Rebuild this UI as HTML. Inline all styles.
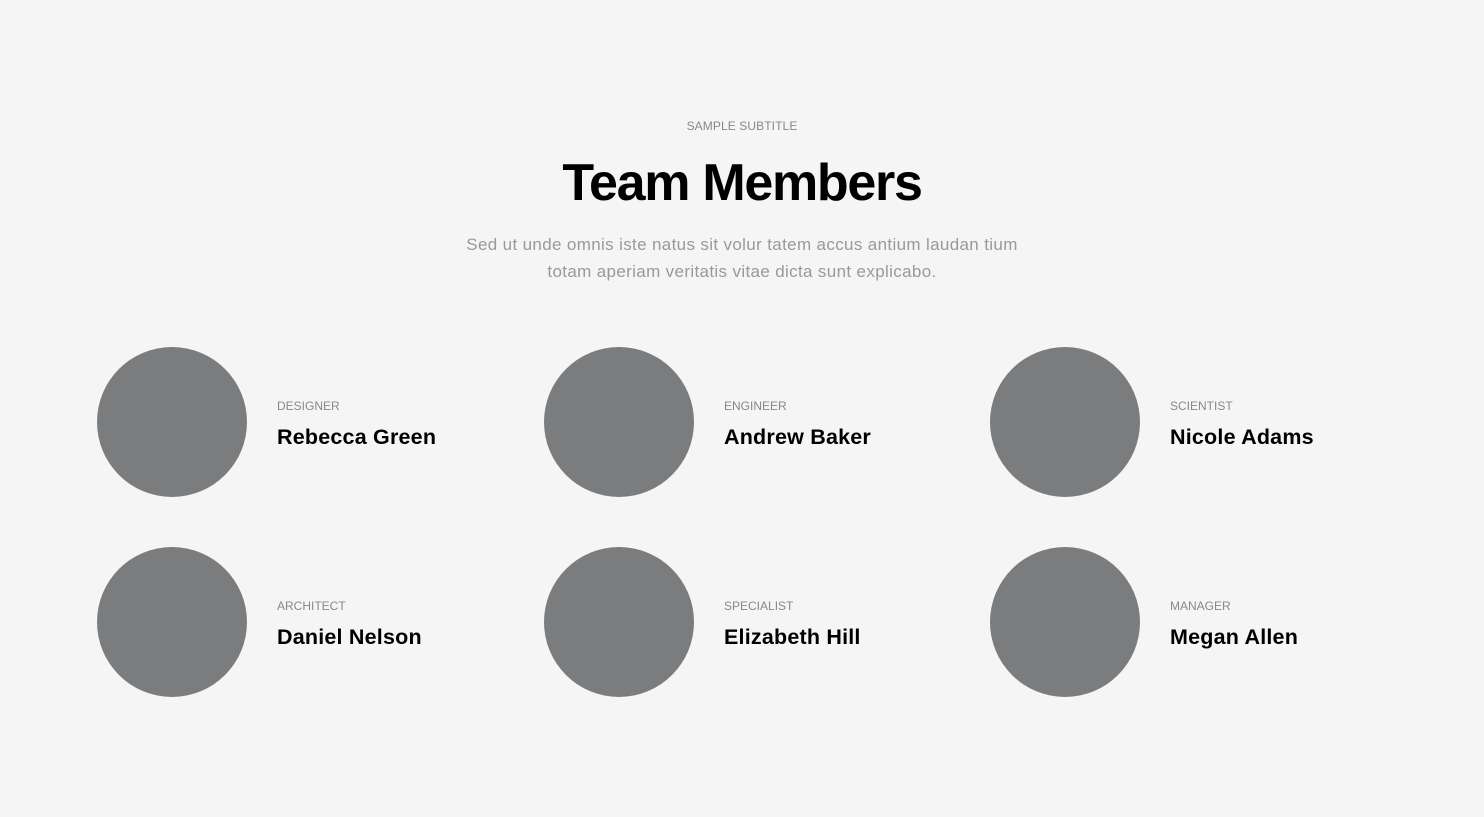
<!DOCTYPE html>
<html><head><meta charset="utf-8"><style>
body{margin:0;background:#f5f5f5;font-family:"Liberation Sans",sans-serif;width:1484px;height:817px;overflow:hidden;position:relative}
.sub{position:absolute;top:119px;left:0;width:1484px;text-align:center;font-size:12px;color:#888;letter-spacing:0.1px}
h1{position:absolute;top:153px;left:0;width:1484px;text-align:center;margin:0;font-size:52px;font-weight:bold;letter-spacing:-1.3px;color:#000;line-height:60px}
.desc{position:absolute;top:231px;left:0;width:1484px;text-align:center;font-size:17px;letter-spacing:0.35px;line-height:27px;color:#999}
.m{position:absolute;width:400px;height:150px}
.c{position:absolute;left:0;top:0;width:150px;height:150px;border-radius:50%;background:#7b7c7d}
.r{position:absolute;left:180px;top:52px;font-size:12px;color:#888}
.n{position:absolute;left:180px;top:78px;font-size:21.5px;font-weight:bold;color:#000;white-space:nowrap;letter-spacing:0.2px}
</style></head><body>
<div class="sub">SAMPLE SUBTITLE</div>
<h1>Team Members</h1>
<div class="desc">Sed ut unde omnis iste natus sit volur tatem accus antium laudan tium<br>totam aperiam veritatis vitae dicta sunt explicabo.</div>
<div class="m" style="left:97px;top:347px"><div class="c"></div><div class="r">DESIGNER</div><div class="n">Rebecca Green</div></div>
<div class="m" style="left:544px;top:347px"><div class="c"></div><div class="r">ENGINEER</div><div class="n">Andrew Baker</div></div>
<div class="m" style="left:990px;top:347px"><div class="c"></div><div class="r">SCIENTIST</div><div class="n">Nicole Adams</div></div>
<div class="m" style="left:97px;top:547px"><div class="c"></div><div class="r">ARCHITECT</div><div class="n">Daniel Nelson</div></div>
<div class="m" style="left:544px;top:547px"><div class="c"></div><div class="r">SPECIALIST</div><div class="n">Elizabeth Hill</div></div>
<div class="m" style="left:990px;top:547px"><div class="c"></div><div class="r">MANAGER</div><div class="n">Megan Allen</div></div>
</body></html>
